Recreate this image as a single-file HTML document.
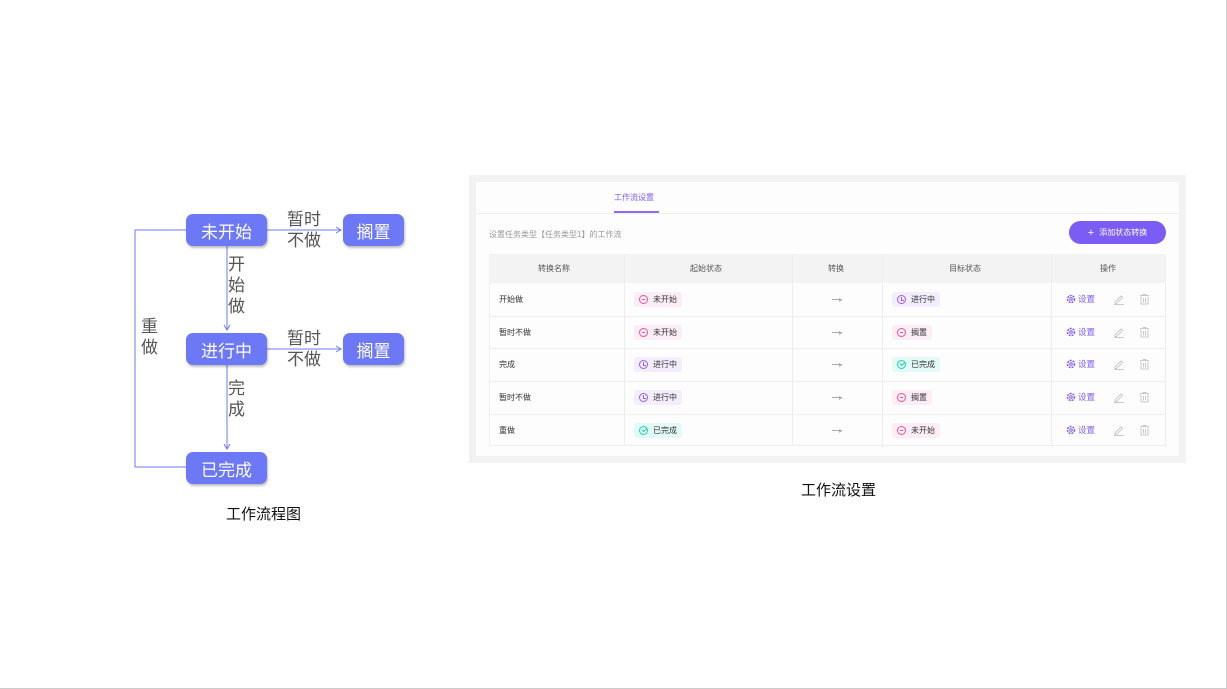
<!DOCTYPE html>
<html><head><meta charset="utf-8"><style>
*{margin:0;padding:0;box-sizing:border-box}
body{width:1227px;height:689px;background:#fff;position:relative;overflow:hidden;font-family:"Liberation Sans","Noto Sans CJK SC",sans-serif}
.abs{position:absolute}
.node{position:absolute;background:#6c78f6;color:#fff;font-size:17px;border-radius:7px;display:flex;align-items:center;justify-content:center;box-shadow:1px 2px 2px rgba(0,0,0,.25)}
.lbl{position:absolute;color:#555;font-size:17px;line-height:21px}
.t{position:absolute;font-size:8px;color:#333}
.tag{position:absolute;height:15px;border-radius:3px;font-size:8px;color:#333;display:flex;align-items:center;padding:0 5px 0 5px;white-space:nowrap}
.tag i{display:inline-block;width:9px;height:9px;border-radius:50%;border:1.3px solid;margin-right:5px;position:relative}
.p{background:#fdeef6}.p i{border-color:#f0509a}
.v{background:#f3eefe}.v i{border-color:#9a5cf5}
.g{background:#e3fbf6}.g i{border-color:#1ed0b0}
.p i:after{content:"";position:absolute;left:1.5px;top:2.6px;width:3.5px;height:1.2px;background:#f0509a}
.v i:after{content:"";position:absolute;left:2.8px;top:1.3px;width:2px;height:2.5px;border-left:1.1px solid #9a5cf5;border-bottom:1.1px solid #9a5cf5}
.g i:after{content:"";position:absolute;left:1.6px;top:1.3px;width:3.5px;height:2px;border-left:1.1px solid #1ed0b0;border-bottom:1.1px solid #1ed0b0;transform:rotate(-45deg)}
.hl{position:absolute;height:1px;background:#eee}
.vl{position:absolute;width:1px;background:#eee}
.ar{position:absolute;left:832px;width:10px;height:1px;background:#aaa}
.ar:after{content:"";position:absolute;right:0;top:-1.5px;border-left:3px solid #aaa;border-top:2px solid transparent;border-bottom:2px solid transparent}
</style></head><body>
<div class="abs" style="right:0;top:0;width:1px;height:689px;background:#ccc"></div>
<div class="abs" style="left:0;bottom:0;width:1227px;height:1px;background:#ccc"></div>

<svg class="abs" style="left:0;top:0" width="460" height="520">
<g stroke="#6c78f6" stroke-width="1" fill="none">
<path d="M267 230H340"/><path d="M336 227l5 3-5 3"/>
<path d="M267 349H340"/><path d="M336 346l5 3-5 3"/>
<path d="M227 246V329"/><path d="M224 325l3 5 3-5"/>
<path d="M227 365V448"/><path d="M224 444l3 5 3-5"/>
<path d="M186 230H135V467H186"/>
</g></svg>
<div class="node" style="left:186px;top:214px;width:81px;height:32px">未开始</div>
<div class="node" style="left:343px;top:214px;width:61px;height:32px">搁置</div>
<div class="node" style="left:186px;top:333px;width:81px;height:32px">进行中</div>
<div class="node" style="left:343px;top:333px;width:61px;height:32px">搁置</div>
<div class="node" style="left:186px;top:452px;width:81px;height:32px">已完成</div>
<div class="lbl" style="left:287px;top:209px">暂时<br>不做</div>
<div class="lbl" style="left:287px;top:328px">暂时<br>不做</div>
<div class="lbl" style="left:228px;top:254px">开<br>始<br>做</div>
<div class="lbl" style="left:228px;top:378px">完<br>成</div>
<div class="lbl" style="left:141px;top:316px">重<br>做</div>
<div class="abs" style="left:226px;top:503px;font-size:15px;color:#111">工作流程图</div>

<div class="abs" style="left:469px;top:175px;width:717px;height:288px;background:#f2f2f2"></div>
<div class="abs" style="left:476px;top:182px;width:703px;height:274px;background:#fdfdfd"></div>
<div class="hl" style="left:476px;top:213px;width:703px;background:#f0f0f0"></div>
<div class="abs" style="left:614px;top:192px;font-size:8px;color:#7b5cf5">工作流设置</div>
<div class="abs" style="left:614px;top:211px;width:45px;height:2px;background:#8b6cf7"></div>
<div class="abs" style="left:489px;top:229px;font-size:8px;color:#999">设置任务类型【任务类型1】的工作流</div>
<div class="abs" style="left:1069px;top:221px;width:97px;height:23px;border-radius:12px;background:#7b5cf5;color:#fff;font-size:8px;display:flex;align-items:center;justify-content:center"><span style="font-size:11px;margin-right:5px">+</span>添加状态转换</div>

<div class="abs" style="left:489px;top:254px;width:677px;height:29px;background:#f3f3f3"></div>
<div class="abs" style="left:489px;top:283px;width:677px;height:163px;background:#fdfdfd;border:1px solid #eee;border-top:none"></div>
<div class="hl" style="left:489px;top:316px;width:677px"></div>
<div class="hl" style="left:489px;top:348px;width:677px"></div>
<div class="hl" style="left:489px;top:381px;width:677px"></div>
<div class="hl" style="left:489px;top:414px;width:677px"></div>
<div class="vl" style="left:624px;top:254px;height:192px"></div>
<div class="vl" style="left:792px;top:254px;height:192px"></div>
<div class="vl" style="left:882px;top:254px;height:192px"></div>
<div class="vl" style="left:1051px;top:254px;height:192px"></div>
<div class="t" style="left:538px;top:263px;color:#555">转换名称</div>
<div class="t" style="left:690px;top:263px;color:#555">起始状态</div>
<div class="t" style="left:828px;top:263px;color:#555">转换</div>
<div class="t" style="left:949px;top:263px;color:#555">目标状态</div>
<div class="t" style="left:1100px;top:263px;color:#555">操作</div>

<div class="t" style="left:499px;top:294px">开始做</div>
<div class="t" style="left:499px;top:327px">暂时不做</div>
<div class="t" style="left:499px;top:359px">完成</div>
<div class="t" style="left:499px;top:392px">暂时不做</div>
<div class="t" style="left:499px;top:425px">重做</div>

<div class="tag p" style="left:634px;top:292px"><i></i>未开始</div>
<div class="tag p" style="left:634px;top:325px"><i></i>未开始</div>
<div class="tag v" style="left:634px;top:357px"><i></i>进行中</div>
<div class="tag v" style="left:634px;top:390px"><i></i>进行中</div>
<div class="tag g" style="left:634px;top:423px"><i></i>已完成</div>

<div class="tag v" style="left:892px;top:292px"><i></i>进行中</div>
<div class="tag p" style="left:892px;top:325px"><i></i>搁置</div>
<div class="tag g" style="left:892px;top:357px"><i></i>已完成</div>
<div class="tag p" style="left:892px;top:390px"><i></i>搁置</div>
<div class="tag p" style="left:892px;top:423px"><i></i>未开始</div>

<div class="ar" style="top:299px"></div>
<div class="ar" style="top:332px"></div>
<div class="ar" style="top:364px"></div>
<div class="ar" style="top:397px"></div>
<div class="ar" style="top:430px"></div>

<svg class="abs" style="left:1060px;top:290px" width="100" height="150">
<g id="r">
<circle cx="11" cy="9" r="3.5" fill="none" stroke="#7b5cf5" stroke-width="1.5" stroke-dasharray="2 1"/>
<circle cx="11" cy="9" r="1.3" fill="none" stroke="#7b5cf5" stroke-width="1"/>
<text x="18" y="12" font-size="8.5" fill="#7b5cf5" font-family="Liberation Sans,Noto Sans CJK SC,sans-serif">设置</text>
<path d="M55 12l6-6 1.5 1.5-6 6H55z M54 14.5h10" fill="none" stroke="#bbb" stroke-width=".8"/>
<path d="M80 5.5h9 M83 5.5v-1h3v1 M81 6.5v7.5h7v-7.5 M83.5 8v4.5 M85.5 8v4.5" fill="none" stroke="#bbb" stroke-width=".8"/>
</g>
<use href="#r" y="33"/><use href="#r" y="65"/><use href="#r" y="98"/><use href="#r" y="131"/>
</svg>

<div class="abs" style="left:801px;top:479px;font-size:15px;color:#111">工作流设置</div>
</body></html>
